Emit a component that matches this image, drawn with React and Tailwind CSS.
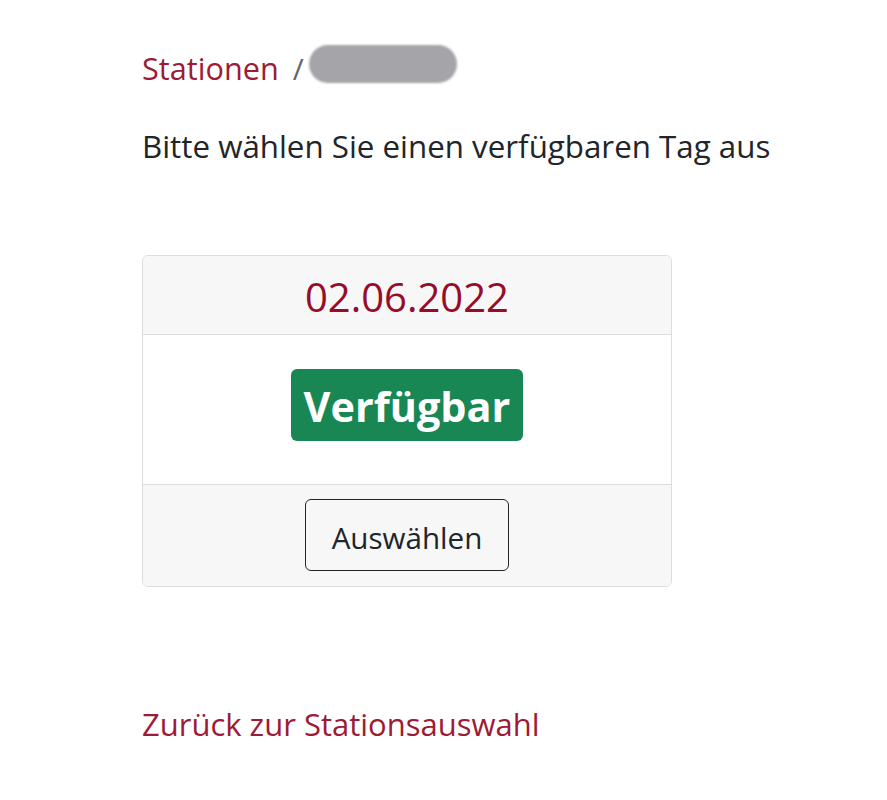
import React from "react";

export default function App() {
  return (
    <div className="min-h-[800px] bg-white pl-[142px] pt-[46px] font-['Open_Sans','Noto_Sans',sans-serif] text-[#212529]">
      <nav className="flex items-start">
        <a className="text-[30.7px] leading-[45px] text-[#9d1b34]">Stationen</a>
        <span className="ml-[14px] text-[30px] leading-[45px] text-[#5f666d]">/</span>
        <span className="ml-[5px] mt-[-1px] h-[38px] w-[148px] rounded-full bg-[#a5a5a9] blur-[1px]" />
      </nav>

      <p className="mt-[33px] text-[31.3px] leading-[45px]">Bitte wählen Sie einen verfügbaren Tag aus</p>

      <div className="mt-[86px] w-[530px] overflow-hidden rounded-[6px] border border-[#dddddd]">
        <div className="border-b border-[#dddddd] bg-[#f7f7f7] pb-[10px] pt-[14px] text-center text-[40px] leading-[54px] text-[#960c29]">
          02.06.2022
        </div>
        <div className="flex justify-center bg-white pb-[43px] pt-[34px]">
          <span className="h-[72px] rounded-[6px] bg-[#198754] px-[13px] pt-[9px] text-[41.4px] font-bold leading-[56px] text-white">
            Verfügbar
          </span>
        </div>
        <div className="flex justify-center border-t border-[#dddddd] bg-[#f7f7f7] pb-[15px] pt-[14px]">
          <button className="rounded-[6px] border border-[#212529] px-[26px] pb-[10px] pt-[16px] text-[29.6px] leading-[44px] text-[#212529]">
            Auswählen
          </button>
        </div>
      </div>

      <a className="mt-[115px] block text-[31px] leading-[45px] text-[#9d1b34]">Zurück zur Stationsauswahl</a>
    </div>
  );
}
